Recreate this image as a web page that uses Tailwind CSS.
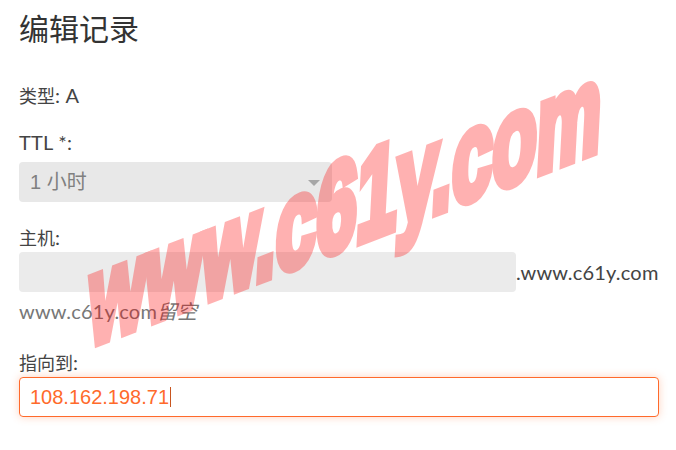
<!DOCTYPE html>
<html>
<head>
<meta charset="utf-8">
<title>编辑记录</title>
<script src="https://cdn.jsdelivr.net/npm/@tailwindcss/browser@4"></script>
</head>
<body class="relative w-[676px] h-[450px] overflow-hidden bg-white text-[#444] font-['Lato','Noto_Sans_CJK_SC',sans-serif] text-[20px] tracking-[0.2px] leading-[26px]">
  <div class="px-[19px] pt-[10px]">
    <h1 class="text-[30px] leading-[36px] font-normal tracking-normal text-[#333]">编辑记录</h1>

    <p class="mt-[36px] h-[26px]"><span class="text-[18px] tracking-normal">类型</span>: A</p>

    <label class="block mt-[21px] h-[26px]">TTL *:</label>
    <div class="relative mt-[7px] w-[313px] h-[40px] rounded bg-[#e8e8e8] px-[11px] flex items-center text-[#808080] tracking-normal font-['Liberation_Sans','Noto_Sans_CJK_SC',sans-serif]">
      1 小时
      <span class="absolute right-[12px] top-[18px] w-0 h-0 border-x-[6px] border-x-transparent border-t-[6px] border-t-[#a6a6a6]"></span>
    </div>

    <label class="block mt-[22px] h-[26px]"><span class="text-[18px] tracking-normal">主机</span>:</label>
    <div class="flex items-center mt-[2px] h-[40px]">
      <div class="w-[497px] h-[40px] shrink-0 rounded bg-[#ebebeb]"></div>
      <span class="whitespace-nowrap">.www.c61y.com</span>
    </div>
    <p class="mt-[6px] h-[26px] text-[#777]"><span>www.c61y.com</span><em class="tracking-normal">留空</em></p>

    <label class="block mt-[25px] h-[26px]"><span class="text-[18px] tracking-normal">指向到</span>:</label>
    <div class="mt-[2px] w-[640px] h-[40px] rounded border border-[#ff6a2b] shadow-[0_0_8px_rgba(255,106,43,0.3)] px-[10px] flex items-center text-[#ff6a2b] tracking-normal font-['Liberation_Sans',sans-serif]">
      108.162.198.71<span class="ml-[1px] w-px h-[20px] bg-[#c8551f]"></span>
    </div>
  </div>

  <div class="absolute left-[90px] top-[239px] origin-left whitespace-nowrap text-[#ff0000] opacity-30 font-['Liberation_Sans',sans-serif] font-bold tracking-normal text-[125px] leading-[125px] [-webkit-text-stroke:10px_#ff0000] [transform:skewY(-21deg)_skewX(-3deg)_scaleX(0.58)]">www.c61y.com</div>
</body>
</html>
